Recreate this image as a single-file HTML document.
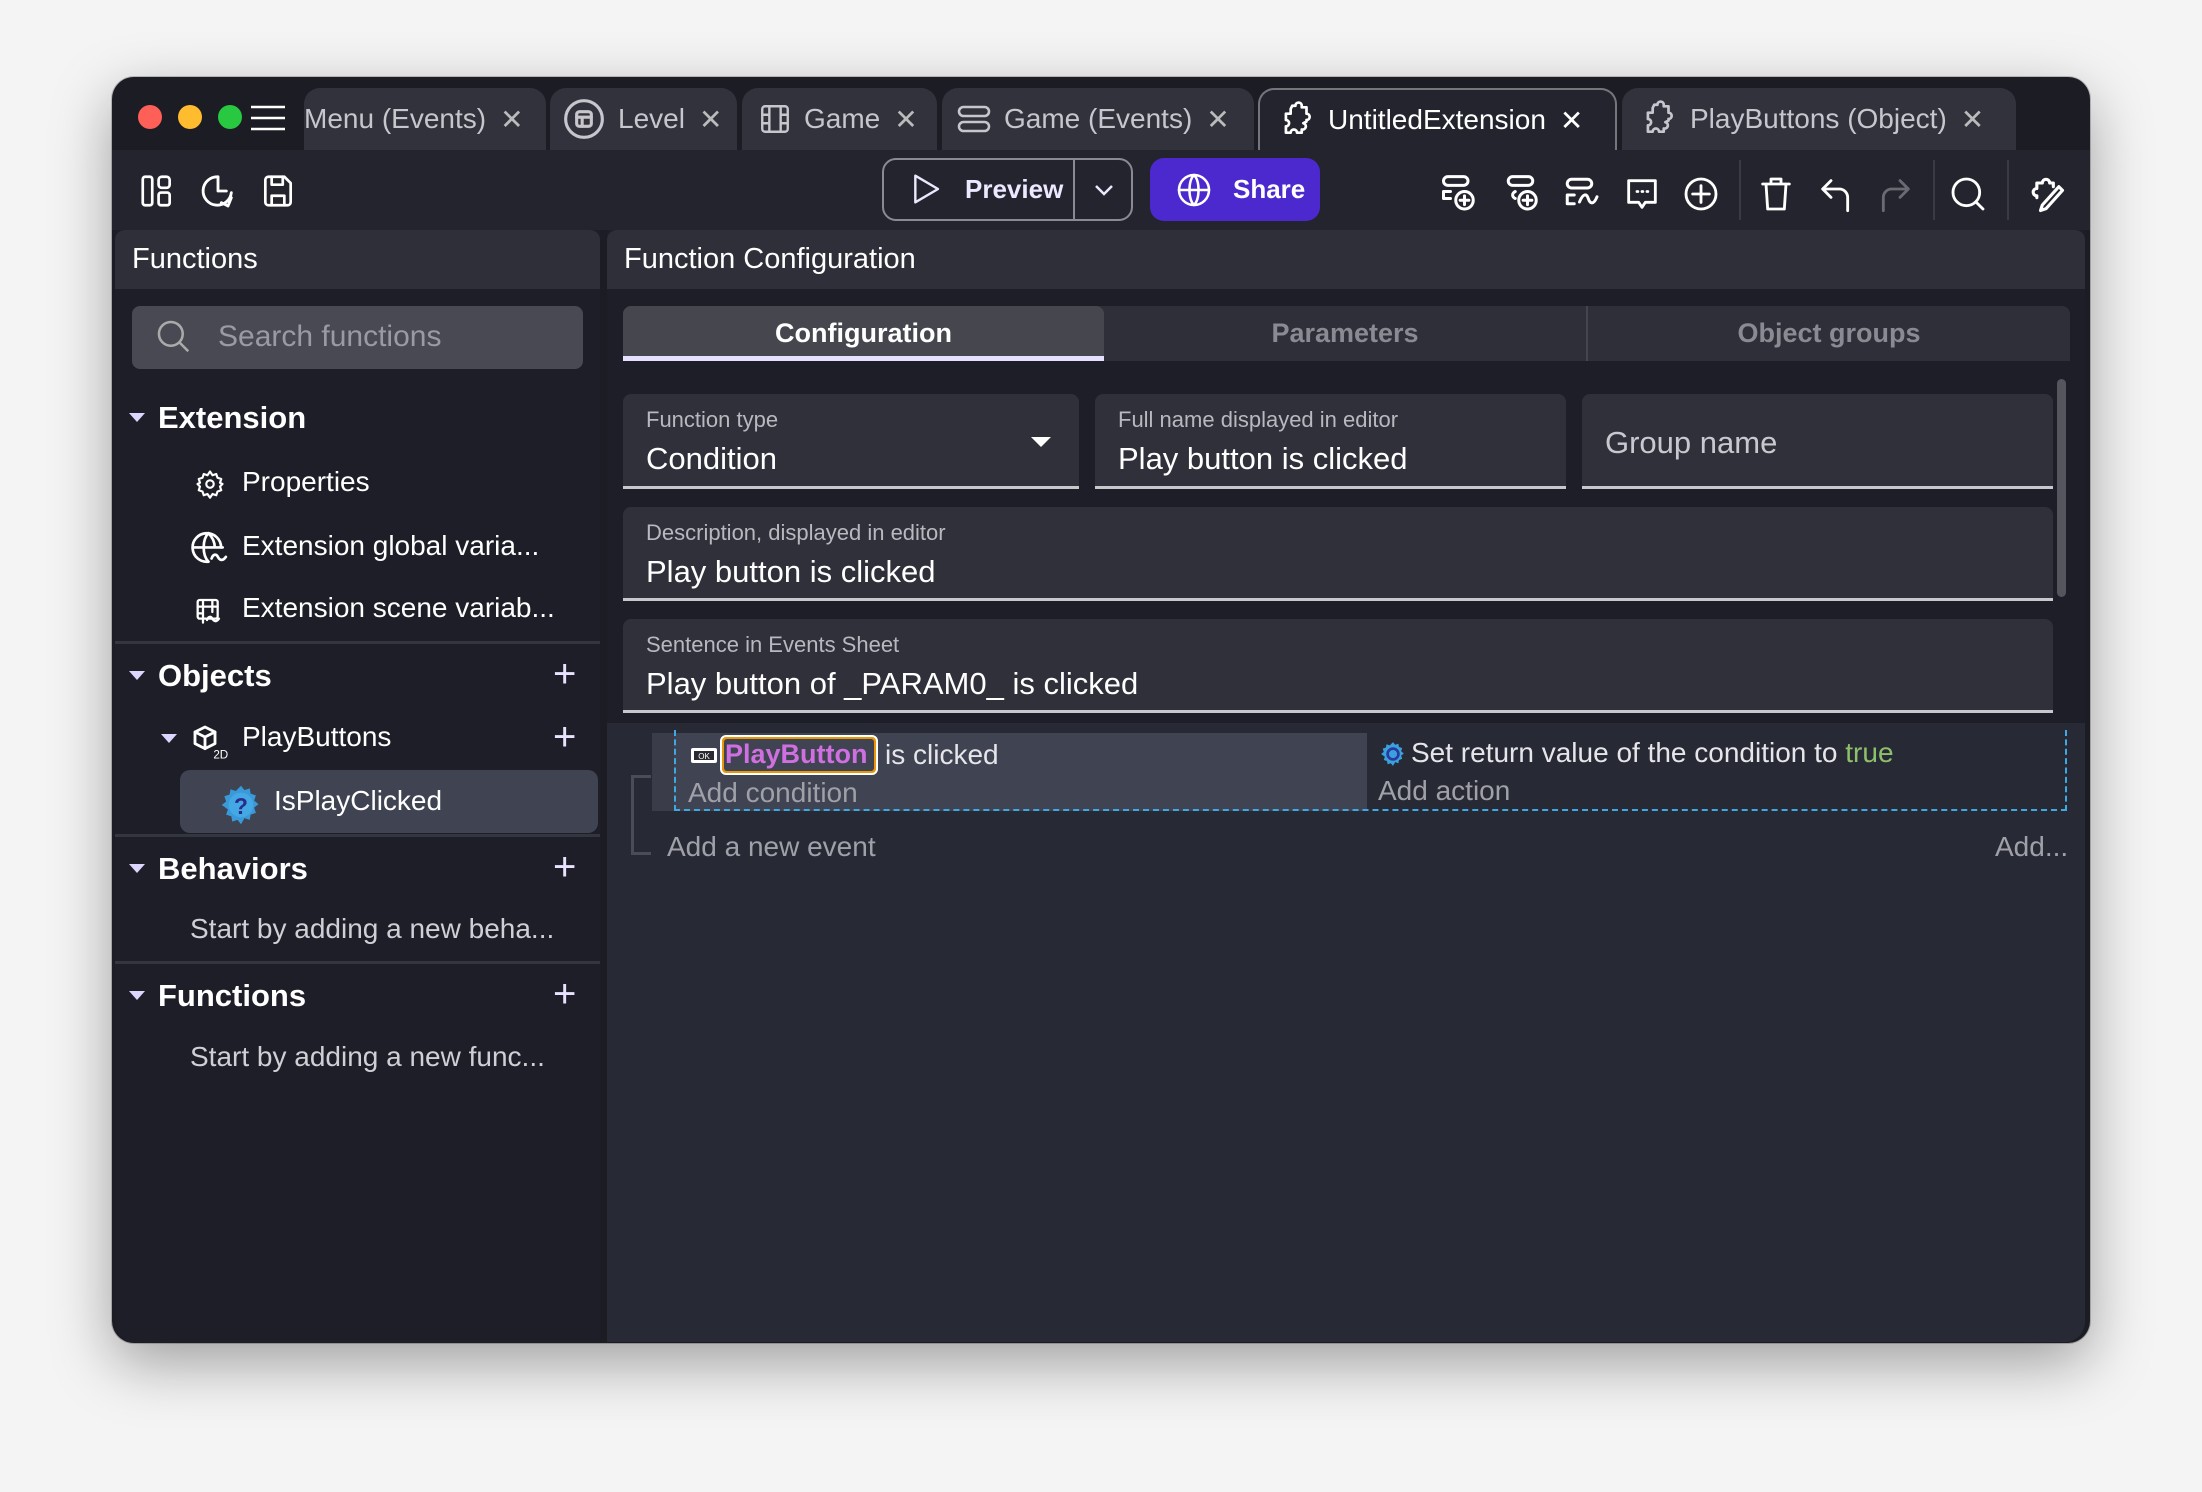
<!DOCTYPE html>
<html><head><meta charset="utf-8">
<style>
*{box-sizing:border-box;margin:0;padding:0}
body{width:2202px;height:1492px;background:#f4f4f4;font-family:"Liberation Sans",sans-serif;position:relative;overflow:hidden}
.a{position:absolute}
.win{left:112px;top:77px;width:1978px;height:1266px;border-radius:22px;background:#1c1c24;overflow:hidden;box-shadow:0 20px 60px rgba(0,0,0,.35),0 0 0 1px rgba(0,0,0,.2)}
.dot{width:24px;height:24px;border-radius:50%;top:105px}
.tab{top:88px;height:62px;background:#32323c;border-radius:16px 16px 0 0;color:#c6c6cc;font-size:28px;display:flex;align-items:center;white-space:nowrap}
.tab .x{font-size:28px;margin-left:14px;color:#bbb}
.tab svg{margin-right:12px}
.t{white-space:nowrap}
.ic{stroke:#fff;fill:none;stroke-width:1.7;stroke-linecap:round;stroke-linejoin:round}
.field{background:#30303a;border-radius:8px 8px 0 0;border-bottom:3px solid #c8c8cc}
.lab{font-size:22px;color:#b8b8bf;left:23px;top:13px}
.val{font-size:31px;color:#fff;left:23px;top:47px}
.sec{font-size:31px;font-weight:bold;color:#fff}
.item{font-size:28px;color:#fff}
.plus{font-size:40px;color:#e8e2ff;font-weight:300}
.div{height:3px;background:#33353f;left:115px;width:485px}
.tri{width:0;height:0;border-left:8px solid transparent;border-right:8px solid transparent;border-top:9px solid #dcd6ff}
</style></head><body>
<div class="a win"></div>
<div class="a dot" style="left:138px;background:#fe5f57"></div>
<div class="a dot" style="left:178px;background:#febc2e"></div>
<div class="a dot" style="left:218px;background:#28c840"></div>
<svg class="a" style="left:250px;top:104px" width="36" height="28"><path d="M1 3H35M1 14H35M1 25H35" stroke="#fff" stroke-width="2.5"/></svg>
<div class="a" style="left:112px;top:150px;width:1978px;height:80px;background:#24242e"></div>

<div class="a tab" style="left:304px;width:242px;padding-left:0"><span class="t">Menu (Events)</span><span class="x">✕</span></div>
<div class="a tab" style="left:550px;width:187px;padding-left:12px"><svg width="44" height="44" viewBox="0 0 24 24" class="ic" style="stroke:#c6c6cc"><circle cx="12" cy="12" r="10"/><rect x="8" y="8" width="8" height="8" rx="1.5"/><path d="M8 11H16M11 11V16"/></svg><span class="t">Level</span><span class="x">✕</span></div>
<div class="a tab" style="left:742px;width:195px;padding-left:16px"><svg width="34" height="34" viewBox="0 0 24 24" class="ic" style="stroke:#c6c6cc"><rect x="3" y="3" width="18" height="18" rx="2"/><path d="M8 3V21M16 3V21M3 9H8M3 15H8M16 9H21M16 15H21"/></svg><span class="t">Game</span><span class="x">✕</span></div>
<div class="a tab" style="left:942px;width:312px;padding-left:14px"><svg width="36" height="36" viewBox="0 0 24 24" class="ic" style="stroke:#c6c6cc"><rect x="2" y="4" width="20" height="6" rx="3"/><rect x="2" y="14" width="20" height="6" rx="3"/></svg><span class="t">Game (Events)</span><span class="x">✕</span></div>
<div class="a tab" style="left:1258px;width:359px;padding-left:18px;background:#24242e;border:2px solid #75757c;border-bottom:none;color:#fff"><svg width="38" height="38" viewBox="0 0 24 24" class="ic"><path d="M9 3h2a2 2 0 0 1 4 0v1h3v4a2 2 0 0 1 0 4v1l-2 1a2 2 0 0 1-1 4v2h-3a2 2 0 0 0-4 0H5v-4a2 2 0 0 0 0-4V8h3V5z"/></svg><span class="t">UntitledExtension</span><span class="x" style="color:#fff">✕</span></div>
<div class="a tab" style="left:1622px;width:394px;padding-left:18px"><svg width="38" height="38" viewBox="0 0 24 24" class="ic" style="stroke:#c6c6cc"><path d="M9 3h2a2 2 0 0 1 4 0v1h3v4a2 2 0 0 1 0 4v1l-2 1a2 2 0 0 1-1 4v2h-3a2 2 0 0 0-4 0H5v-4a2 2 0 0 0 0-4V8h3V5z"/></svg><span class="t">PlayButtons (Object)</span><span class="x">✕</span></div>

<svg class="a" style="left:138px;top:172px" width="38" height="38" viewBox="0 0 24 24"><g class="ic"><rect x="3" y="3" width="6" height="18" rx="1.5"/><rect x="13" y="3" width="7" height="7" rx="2"/><rect x="13" y="13" width="7" height="8" rx="1.5"/></g></svg>
<svg class="a" style="left:198px;top:171px" width="40" height="40" viewBox="0 0 24 24"><g class="ic"><path d="M20 13A8.5 8.5 0 1 1 12 3.5"/><path d="M12 4V12H17"/><path d="M20 16L18 21L14 19"/></g></svg>
<svg class="a" style="left:259px;top:172px" width="38" height="38" viewBox="0 0 24 24"><g class="ic"><path d="M4 5a2 2 0 0 1 2-2h10l4 4v12a2 2 0 0 1-2 2H6a2 2 0 0 1-2-2z"/><path d="M8 3V8H15V3M8 21V15H16V21"/></g></svg>

<div class="a" style="left:882px;top:158px;width:251px;height:63px;border:2px solid #8a8a92;border-radius:14px"></div>
<div class="a" style="left:1073px;top:159px;width:2px;height:61px;background:#8a8a92"></div>
<svg class="a" style="left:910px;top:172px" width="32" height="34" viewBox="0 0 24 24"><path d="M4 2L21 12L4 22Z" fill="none" stroke="#ece8ff" stroke-width="1.8" stroke-linejoin="round"/></svg>
<div class="a t" style="left:965px;top:174px;font-size:26px;font-weight:bold;color:#ece8ff">Preview</div>
<svg class="a" style="left:1092px;top:180px" width="24" height="20"><path d="M4 6L12 14L20 6" stroke="#ece8ff" stroke-width="2.5" fill="none"/></svg>
<div class="a" style="left:1150px;top:158px;width:170px;height:63px;background:#4c29cf;border-radius:14px"></div>
<svg class="a" style="left:1176px;top:172px" width="36" height="36" viewBox="0 0 24 24"><g class="ic" stroke-width="2"><circle cx="12" cy="12" r="10"/><path d="M2 12H22M12 2C8 6 8 18 12 22M12 2C16 6 16 18 12 22"/></g></svg>
<div class="a t" style="left:1233px;top:174px;font-size:26px;font-weight:bold;color:#fff">Share</div>

<svg class="a" style="left:1440px;top:174px" width="42" height="42" viewBox="0 0 24 24"><g class="ic" stroke-width="1.4"><rect x="2" y="1.5" width="14" height="5" rx="2.5"/><path d="M6 10H2V14H6"/><circle cx="14" cy="15" r="5"/><path d="M14 12.5V17.5M11.5 15H16.5"/></g></svg>
<svg class="a" style="left:1503px;top:174px" width="42" height="42" viewBox="0 0 24 24"><g class="ic" stroke-width="1.4"><rect x="3" y="1.5" width="14" height="5" rx="2.5"/><path d="M7 10C5 11 5 13 7 14"/><circle cx="14" cy="15" r="5"/><path d="M14 12.5V17.5M11.5 15H16.5"/></g></svg>
<svg class="a" style="left:1562px;top:174px" width="42" height="42" viewBox="0 0 24 24"><g class="ic" stroke-width="1.4"><rect x="3" y="3" width="14" height="5" rx="2.5"/><path d="M7 12H3V17H7M10 16C12 11 14 11 15 14S18 18 20 13"/></g></svg>
<svg class="a" style="left:1622px;top:174px" width="40" height="40" viewBox="0 0 24 24"><g class="ic" stroke-width="1.5"><path d="M4 4H20V17H14L12 20L10 17H4Z"/><path d="M9 10.5h.5M12 10.5h.5M15 10.5h.5"/></g></svg>
<svg class="a" style="left:1681px;top:174px" width="40" height="40" viewBox="0 0 24 24"><g class="ic" stroke-width="1.5"><circle cx="12" cy="12" r="9"/><path d="M12 7V17M7 12H17"/></g></svg>
<div class="a" style="left:1739px;top:160px;width:2px;height:60px;background:#3a3a44"></div>
<svg class="a" style="left:1756px;top:174px" width="40" height="40" viewBox="0 0 24 24"><g class="ic" stroke-width="1.5"><path d="M4 6H20M9 6V3H15V6M6 6L7 21H17L18 6"/></g></svg>
<svg class="a" style="left:1816px;top:174px" width="40" height="40" viewBox="0 0 24 24"><g class="ic" stroke-width="1.5"><path d="M9 4L4 9L9 14M4 9H14A5 5 0 0 1 19 14V22"/></g></svg>
<svg class="a" style="left:1875px;top:174px" width="40" height="40" viewBox="0 0 24 24"><g class="ic" stroke-width="1.5" style="stroke:#6a6a72"><path d="M15 4L20 9L15 14M20 9H10A5 5 0 0 0 5 14V22"/></g></svg>
<div class="a" style="left:1933px;top:160px;width:2px;height:60px;background:#3a3a44"></div>
<svg class="a" style="left:1948px;top:174px" width="40" height="40" viewBox="0 0 24 24"><g class="ic" stroke-width="1.6"><circle cx="11" cy="11" r="8"/><path d="M17 17L21 21"/></g></svg>
<div class="a" style="left:2007px;top:160px;width:2px;height:60px;background:#3a3a44"></div>
<svg class="a" style="left:2024px;top:172px" width="44" height="44" viewBox="0 0 24 24"><g class="ic" stroke-width="1.4"><path d="M7 14V13a2 2 0 0 1 0-4V6h3a2 2 0 0 1 4 0h2v2"/><path d="M19 8L21 10L12 20L9 21L10 18Z"/></g></svg>

<div class="a" style="left:115px;top:230px;width:485px;height:1112px;background:#1e1e28;border-bottom-left-radius:20px"></div>
<div class="a" style="left:115px;top:230px;width:485px;height:59px;background:#2f2f39;border-radius:10px 10px 0 0"></div>
<div class="a t" style="left:132px;top:243px;font-size:29px;color:#fff">Functions</div>
<div class="a" style="left:132px;top:306px;width:451px;height:63px;background:#494953;border-radius:8px"></div>
<svg class="a" style="left:155px;top:318px" width="38" height="38" viewBox="0 0 24 24"><g fill="none" stroke="#aaa" stroke-width="1.6"><circle cx="10" cy="10" r="7.5"/><path d="M15.5 15.5L21 21"/></g></svg>
<div class="a t" style="left:218px;top:320px;font-size:30px;color:#9a9aa2">Search functions</div>

<div class="a tri" style="left:129px;top:413px"></div>
<div class="a t sec" style="left:158px;top:400px">Extension</div>
<svg class="a" style="left:195px;top:469px" width="30" height="30" viewBox="0 0 24 24"><g class="ic" stroke-width="1.6"><circle cx="12" cy="12" r="3"/><path d="M12 2l2 3 3-1 1 3 3 1-1 3 2 1-2 2 1 3-3 1-1 3-3-1-2 3-2-3-3 1-1-3-3-1 1-3-2-2 2-1-1-3 3-1 1-3 3 1z"/></g></svg>
<div class="a t item" style="left:242px;top:466px">Properties</div>
<svg class="a" style="left:191px;top:530px" width="38" height="38" viewBox="0 0 24 24"><g class="ic" stroke-width="1.4"><path d="M19 11A9 9 0 1 0 11 20"/><path d="M2 11H20M11 2C7 6 7 16 11 20M11 2C14 5 15 8 15 11"/><path d="M13 18C14 15 16 15 17 17S20 20 22 17"/></g></svg>
<div class="a t item" style="left:242px;top:530px">Extension global varia...</div>
<svg class="a" style="left:195px;top:596px" width="32" height="32" viewBox="0 0 24 24"><g class="ic" stroke-width="1.5"><rect x="2" y="3" width="15" height="14" rx="1.5"/><path d="M6 3V20M13 3V12M2 8H17M2 13H6"/><path d="M9 18C10 15 12 15 13 17S16 20 18 17"/></g></svg>
<div class="a t item" style="left:242px;top:592px">Extension scene variab...</div>
<div class="a div" style="top:641px"></div>

<div class="a tri" style="left:129px;top:671px"></div>
<div class="a t sec" style="left:158px;top:658px">Objects</div>
<div class="a t plus" style="left:553px;top:652px">+</div>
<div class="a tri" style="left:161px;top:734px"></div>
<svg class="a" style="left:190px;top:722px" width="40" height="40" viewBox="0 0 24 24"><g class="ic" stroke-width="1.3"><path d="M3 6L9 3L15 6V13L9 16L3 13Z"/><path d="M3 6L9 9L15 6M9 9V16"/></g><text x="14" y="22" font-size="7" fill="#fff" font-family="Liberation Sans">2D</text></svg>
<div class="a t item" style="left:242px;top:721px">PlayButtons</div>
<div class="a t plus" style="left:553px;top:715px">+</div>
<div class="a" style="left:180px;top:770px;width:418px;height:63px;background:#3f4352;border-radius:10px"></div>
<svg class="a" style="left:220px;top:784px" width="42" height="42" viewBox="0 0 24 24"><path d="M12 1l2 2.5 3-1 .5 3 3 1-1 3 2.5 2-2.5 2 1 3-3 1-.5 3-3-1L12 23l-2-2.5-3 1-.5-3-3-1 1-3L1 12l2.5-2-1-3 3-1 .5-3 3 1z" fill="#3a9ad9"/><circle cx="12" cy="12" r="7" fill="#44a8e4"/><text x="12" y="17" text-anchor="middle" font-size="13" font-weight="bold" fill="#2a2a8a" font-family="Liberation Sans">?</text></svg>
<div class="a t item" style="left:274px;top:785px">IsPlayClicked</div>
<div class="a div" style="top:834px"></div>

<div class="a tri" style="left:129px;top:864px"></div>
<div class="a t sec" style="left:158px;top:851px">Behaviors</div>
<div class="a t plus" style="left:553px;top:845px">+</div>
<div class="a t item" style="left:190px;top:913px;color:#cfcfd5">Start by adding a new beha...</div>
<div class="a div" style="top:961px"></div>
<div class="a tri" style="left:129px;top:991px"></div>
<div class="a t sec" style="left:158px;top:978px">Functions</div>
<div class="a t plus" style="left:553px;top:972px">+</div>
<div class="a t item" style="left:190px;top:1041px;color:#cfcfd5">Start by adding a new func...</div>

<div class="a" style="left:607px;top:230px;width:1478px;height:1112px;background:#1e1e28;border-bottom-right-radius:20px"></div>
<div class="a" style="left:607px;top:230px;width:1478px;height:59px;background:#2f2f39;border-radius:10px 10px 0 0"></div>
<div class="a t" style="left:624px;top:243px;font-size:29px;color:#fff">Function Configuration</div>

<div class="a" style="left:623px;top:306px;width:1447px;height:55px;background:#2f2f39;border-radius:8px 8px 0 0"></div>
<div class="a" style="left:623px;top:306px;width:481px;height:55px;background:#46464f;border-radius:8px 8px 0 0"></div>
<div class="a" style="left:623px;top:356px;width:481px;height:5px;background:#e6e0ff"></div>
<div class="a" style="left:1586px;top:306px;width:2px;height:55px;background:#45454e"></div>
<div class="a t" style="left:623px;top:318px;width:481px;text-align:center;font-size:27px;font-weight:bold;color:#fff">Configuration</div>
<div class="a t" style="left:1104px;top:318px;width:482px;text-align:center;font-size:27px;font-weight:bold;color:#8a8a92">Parameters</div>
<div class="a t" style="left:1588px;top:318px;width:482px;text-align:center;font-size:27px;font-weight:bold;color:#8a8a92">Object groups</div>

<div class="a field" style="left:623px;top:394px;width:456px;height:95px"><div class="a t lab">Function type</div><div class="a t val">Condition</div><div class="a tri" style="left:408px;top:43px;border-top-color:#fff;border-width:10px 10px 0 10px"></div></div>
<div class="a field" style="left:1095px;top:394px;width:471px;height:95px"><div class="a t lab">Full name displayed in editor</div><div class="a t val">Play button is clicked</div></div>
<div class="a field" style="left:1582px;top:394px;width:471px;height:95px"><div class="a t val" style="top:31px;color:#c8c8ce">Group name</div></div>
<div class="a field" style="left:623px;top:507px;width:1430px;height:94px"><div class="a t lab">Description, displayed in editor</div><div class="a t val">Play button is clicked</div></div>
<div class="a field" style="left:623px;top:619px;width:1430px;height:94px"><div class="a t lab">Sentence in Events Sheet</div><div class="a t val">Play button of _PARAM0_ is clicked</div></div>
<div class="a" style="left:2057px;top:379px;width:9px;height:218px;background:#55555e;border-radius:5px"></div>

<div class="a" style="left:607px;top:723px;width:1478px;height:619px;background:#272a35;border-bottom-right-radius:20px"></div>
<div class="a" style="left:631px;top:775px;width:3px;height:80px;background:#4a4d58"></div>
<div class="a" style="left:631px;top:852px;width:20px;height:3px;background:#4a4d58"></div>
<div class="a" style="left:631px;top:775px;width:20px;height:3px;background:#4a4d58"></div>
<div class="a" style="left:652px;top:733px;width:22px;height:78px;background:#3a3d49"></div>
<div class="a" style="left:674px;top:733px;width:693px;height:78px;background:#3f4352"></div>
<div class="a" style="left:674px;top:730px;width:1393px;height:81px;border:2px dashed #3ea9e2;border-top:none"></div>
<svg class="a" style="left:690px;top:746px" width="28" height="20"><rect x="1" y="2" width="26" height="15" rx="2" fill="#fff"/><rect x="4" y="5" width="20" height="9" fill="#2a2a30"/><text x="14" y="13" font-size="8" fill="#fff" text-anchor="middle" font-family="Liberation Sans">OK</text></svg>
<div class="a" style="left:720px;top:735px;width:158px;height:40px;background:#e8960a;border:2px solid #fff;border-radius:6px"></div>
<div class="a" style="left:724px;top:739px;width:150px;height:32px;background:#3f4352;border-radius:3px"></div>
<div class="a t" style="left:725px;top:739px;font-size:27px;font-weight:bold;color:#d070e0">PlayButton</div>
<div class="a t" style="left:885px;top:739px;font-size:28px;color:#e6e6ea">is clicked</div>
<div class="a t" style="left:688px;top:777px;font-size:28px;color:#a0a0a8">Add condition</div>
<svg class="a" style="left:1380px;top:741px" width="26" height="26" viewBox="0 0 24 24"><path d="M12 1l2 2.5 3-1 .5 3 3 1-1 3 2.5 2-2.5 2 1 3-3 1-.5 3-3-1L12 23l-2-2.5-3 1-.5-3-3-1 1-3L1 12l2.5-2-1-3 3-1 .5-3 3 1z" fill="#3aa0e0"/><circle cx="12" cy="12" r="5" fill="none" stroke="#2a3a9a" stroke-width="2.5"/></svg>
<div class="a t" style="left:1411px;top:737px;font-size:28px;color:#e6e6ea">Set return value of the condition to <span style="color:#8ec06c">true</span></div>
<div class="a t" style="left:1378px;top:775px;font-size:28px;color:#a0a0a8">Add action</div>
<div class="a t" style="left:667px;top:831px;font-size:28px;color:#a0a0a8">Add a new event</div>
<div class="a t" style="left:1995px;top:831px;font-size:28px;color:#a0a0a8">Add...</div>
</body></html>
